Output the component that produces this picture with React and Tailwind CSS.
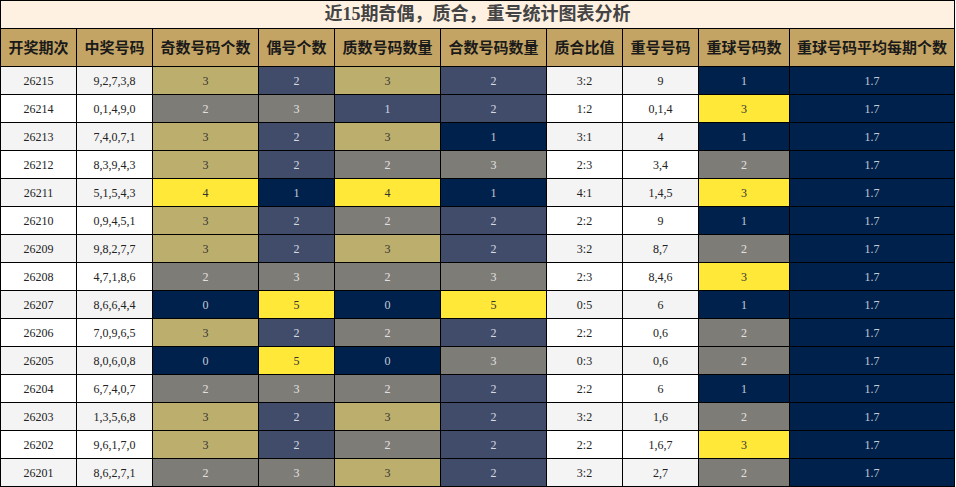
const rows = [
  ["26215", "9,2,7,3,8", 3, 2, 3, 2, "3:2", "9", 1],
  ["26214", "0,1,4,9,0", 2, 3, 1, 2, "1:2", "0,1,4", 3],
  ["26213", "7,4,0,7,1", 3, 2, 3, 1, "3:1", "4", 1],
  ["26212", "8,3,9,4,3", 3, 2, 2, 3, "2:3", "3,4", 2],
  ["26211", "5,1,5,4,3", 4, 1, 4, 1, "4:1", "1,4,5", 3],
  ["26210", "0,9,4,5,1", 3, 2, 2, 2, "2:2", "9", 1],
  ["26209", "9,8,2,7,7", 3, 2, 3, 2, "3:2", "8,7", 2],
  ["26208", "4,7,1,8,6", 2, 3, 2, 3, "2:3", "8,4,6", 3],
  ["26207", "8,6,6,4,4", 0, 5, 0, 5, "0:5", "6", 1],
  ["26206", "7,0,9,6,5", 3, 2, 2, 2, "2:2", "0,6", 2],
  ["26205", "8,0,6,0,8", 0, 5, 0, 3, "0:3", "0,6", 2],
  ["26204", "6,7,4,0,7", 2, 3, 2, 2, "2:2", "6", 1],
  ["26203", "1,3,5,6,8", 3, 2, 3, 2, "3:2", "1,6", 2],
  ["26202", "9,6,1,7,0", 3, 2, 2, 2, "2:2", "1,6,7", 3],
  ["26201", "8,6,2,7,1", 2, 3, 3, 2, "3:2", "2,7", 2],
];

const headers = [
  "开奖期次",
  "中奖号码",
  "奇数号码个数",
  "偶号个数",
  "质数号码数量",
  "合数号码数量",
  "质合比值",
  "重号号码",
  "重球号码数",
  "重球号码平均每期个数",
];

// heat colours
const navy = "bg-[#00214c] text-[#c3cad8]";
const slate = "bg-[#414c6a] text-[#d6d9e0]";
const gray = "bg-[#7e7c77] text-[#e2e2e2]";
const khaki = "bg-[#bcaf6d] text-[#333]";
const yellow = "bg-[#ffe838] text-[#333]";

const oddMap = { 0: navy, 2: gray, 3: khaki, 4: yellow };
const evenMap = { 1: navy, 2: slate, 3: gray, 5: yellow };
const primeMap = { 0: navy, 1: slate, 2: gray, 3: khaki, 4: yellow };
const compMap = { 1: navy, 2: slate, 3: gray, 5: yellow };
const repMap = { 1: navy, 2: gray, 3: yellow };

const cell = "flex items-center justify-center";

export default function App() {
  return (
    <div className="w-[956px] h-[487px] bg-white">
      <div
        className="grid w-[955px] bg-black gap-px p-px grid-cols-[75px_75px_105px_75px_105px_105px_75px_75px_90px_164px] grid-rows-[27px_37px_repeat(15,27px)] text-[12px]"
        style={{ fontFamily: '"Liberation Serif", "Noto Sans CJK SC", serif' }}
      >
        <div className="col-span-10 bg-[#fef1e2] flex items-center justify-center text-[18px] font-bold text-[#444]">
          近15期奇偶，质合，重号统计图表分析
        </div>
        {headers.map((h) => (
          <div
            key={h}
            className={`${cell} bg-[#c4a464] text-[15px] font-bold text-[#1a1a1a]`}
            style={{ fontFamily: '"Noto Sans CJK SC", sans-serif' }}
          >
            {h}
          </div>
        ))}
        {rows.map((r, i) => {
          const light = i % 2 === 0 ? "bg-[#f4f4f4]" : "bg-white";
          return [
            <div key={`${r[0]}a`} className={`${cell} ${light} text-[#222]`}>{r[0]}</div>,
            <div key={`${r[0]}b`} className={`${cell} ${light} text-[#222]`}>{r[1]}</div>,
            <div key={`${r[0]}c`} className={`${cell} ${oddMap[r[2]]}`}>{r[2]}</div>,
            <div key={`${r[0]}d`} className={`${cell} ${evenMap[r[3]]}`}>{r[3]}</div>,
            <div key={`${r[0]}e`} className={`${cell} ${primeMap[r[4]]}`}>{r[4]}</div>,
            <div key={`${r[0]}f`} className={`${cell} ${compMap[r[5]]}`}>{r[5]}</div>,
            <div key={`${r[0]}g`} className={`${cell} ${light} text-[#222]`}>{r[6]}</div>,
            <div key={`${r[0]}h`} className={`${cell} ${light} text-[#222]`}>{r[7]}</div>,
            <div key={`${r[0]}i`} className={`${cell} ${repMap[r[8]]}`}>{r[8]}</div>,
            <div key={`${r[0]}j`} className={`${cell} ${navy}`}>1.7</div>,
          ];
        })}
      </div>
    </div>
  );
}
